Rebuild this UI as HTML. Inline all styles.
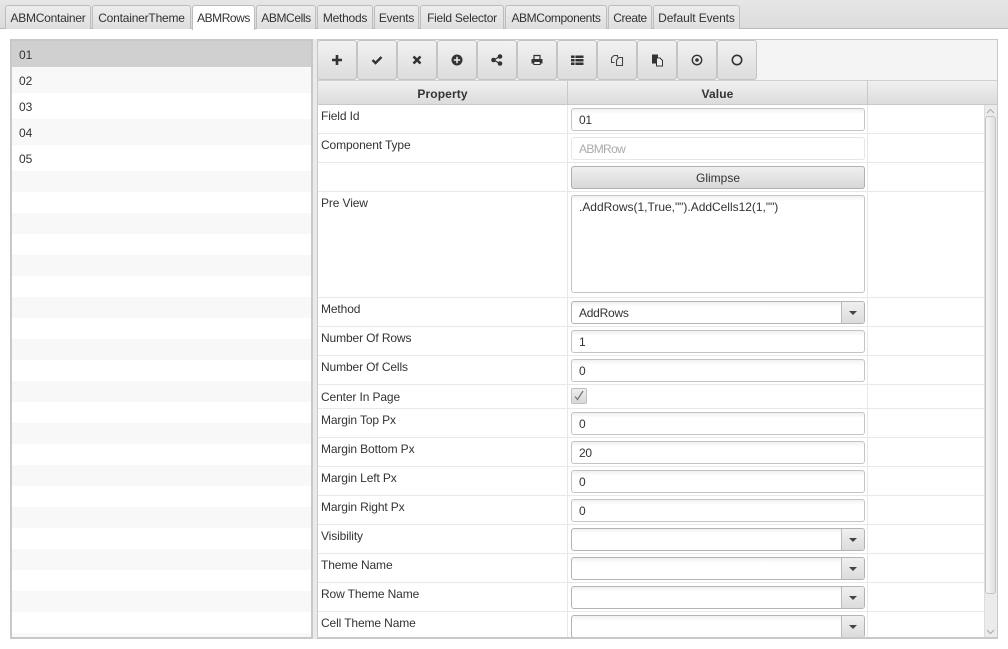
<!DOCTYPE html>
<html><head><meta charset="utf-8"><title>ABMRows</title>
<style>
html,body{margin:0;padding:0;width:1008px;height:649px;overflow:hidden;background:#fff}
body{font-family:"Liberation Sans",sans-serif;font-size:12px;color:#333;position:relative}
div{position:absolute;box-sizing:border-box;white-space:nowrap}
.tab{top:5px;height:24px;border:1px solid #bdbdbd;border-bottom:0;border-radius:3px 3px 0 0;background:linear-gradient(#ededed,#dedede);text-align:center;line-height:24px;letter-spacing:-.25px}
.tab.a{background:#fff;height:25px;z-index:2}
.it{left:12px;width:299px;height:21px;background:#f8f8f8}
.l{left:12px;width:299px;height:26px;padding-left:7px;line-height:28px}
.b{top:40px;width:40px;height:40px;border:1px solid #c4c4c4;border-radius:3px;background:linear-gradient(#f2f2f2,#dcdcdc)}
.b svg{position:absolute;left:10px;top:10px}
.h{top:81px;height:24px;background:linear-gradient(#f0f0f0,#dcdcdc);border-right:1px solid #c8c8c8;border-bottom:1px solid #c8c8c8;text-align:center;font-weight:bold;line-height:26px;letter-spacing:.12px}
.ln{left:318px;width:666px;height:1px;background:#e8e8e8}
.p{left:321px;line-height:14px;letter-spacing:-.12px}
.i{left:571px;width:294px;height:23px;border:1px solid #c4c4c4;border-radius:3px;padding-left:7px;line-height:23px;background:linear-gradient(#f1f1f1,#fff 5px);letter-spacing:-.25px}
.s{border-color:#b4b4b4}
.ar{right:0;top:0;width:23px;height:21px;border-left:1px solid #bbb;background:linear-gradient(#f0f0f0,#dcdcdc);border-radius:0 2px 2px 0}
.ar:after{content:"";position:absolute;left:7px;top:9px;border:4px solid transparent;border-top:4px solid #444;border-bottom:0}
</style></head><body>
<div style="left:0;top:0;width:1008px;height:29px;background:linear-gradient(#e6e6e6,#dcdcdc);border-bottom:1px solid #b8b8b8"></div>
<div class="tab" style="left:5px;width:86px">ABMContainer</div>
<div class="tab" style="left:92px;width:99px;letter-spacing:-.2px">ContainerTheme</div>
<div class="tab a" style="left:192px;width:63px;letter-spacing:-.45px">ABMRows</div>
<div class="tab" style="left:256px;width:60px;letter-spacing:-.4px">ABMCells</div>
<div class="tab" style="left:317px;width:56px">Methods</div>
<div class="tab" style="left:374px;width:45px">Events</div>
<div class="tab" style="left:420px;width:84px">Field Selector</div>
<div class="tab" style="left:505px;width:102px;letter-spacing:-.38px">ABMComponents</div>
<div class="tab" style="left:608px;width:44px;letter-spacing:-.4px">Create</div>
<div class="tab" style="left:653px;width:87px;letter-spacing:-.1px">Default Events</div>

<div style="left:10px;top:39px;width:303px;height:600px;border:2px solid #c8c8c8;background:#fff"></div>
<div style="left:313px;top:39px;width:4px;height:600px;background:#eaeaea"></div>
<div class="l" style="top:41px;background:#d0d0d0">01</div>
<div class="l" style="top:67px;background:#f8f8f8">02</div>
<div class="l" style="top:93px">03</div>
<div class="l" style="top:119px;background:#f8f8f8">04</div>
<div class="l" style="top:145px">05</div>
<div class="it" style="top:171px"></div><div class="it" style="top:213px"></div><div class="it" style="top:255px"></div><div class="it" style="top:297px"></div><div class="it" style="top:339px"></div><div class="it" style="top:381px"></div><div class="it" style="top:423px"></div><div class="it" style="top:465px"></div><div class="it" style="top:507px"></div><div class="it" style="top:549px"></div><div class="it" style="top:591px"></div><div class="it" style="top:633px;height:4px"></div>

<div style="left:317px;top:39px;width:681px;height:600px;border:1px solid #c8c8c8;border-bottom:2px solid #c8c8c8;background:#fff"></div>
<div style="left:318px;top:40px;width:679px;height:41px;background:#f4f4f4;border-bottom:1px solid #d0d0d0"></div>

<div class="b" style="left:317px"><svg width="18" height="18" fill="#333"><path d="M7.700 4h2.600v3.700H14v2.600h-3.700V14H7.700v-3.700H4V7.700h3.700z"/></svg></div>
<div class="b" style="left:357px"><svg width="18" height="18"><path d="M4.500 9l3 3 6-6" fill="none" stroke="#333" stroke-width="2.400"/></svg></div>
<div class="b" style="left:397px"><svg width="18" height="18"><path d="M5.500 5.500l7 7M12.500 5.500l-7 7" fill="none" stroke="#333" stroke-width="2.600"/></svg></div>
<div class="b" style="left:437px"><svg width="18" height="18"><circle cx="9" cy="9" r="5.500" fill="#333"/><path d="M5.800 9h6.400M9 5.800v6.400" stroke="#eee" stroke-width="1.500"/></svg></div>
<div class="b" style="left:477px"><svg width="18" height="18" fill="#333"><circle cx="5.500" cy="9" r="2.300"/><circle cx="12" cy="5.500" r="2.300"/><circle cx="12" cy="12.500" r="2.300"/><path d="M5.500 9L12 5.500M5.500 9L12 12.500" stroke="#333" stroke-width="1.200"/></svg></div>
<div class="b" style="left:517px"><svg width="18" height="18"><path d="M6 8V4.500h6V8" fill="none" stroke="#333" stroke-width="1.200"/><path d="M3.500 8h11v4.500h-11z" fill="#333"/><path d="M5.800 10.500h6.400v3H5.800z" fill="#ececec" stroke="#333"/></svg></div>
<div class="b" style="left:557px"><svg width="18" height="18" fill="#333"><path d="M3 4.500h12.500V7H3zM3 8h12.500v2.500H3zM3 11.500h12.500V14H3z"/><path d="M7 4v10.500" stroke="#eee" stroke-width=".8"/></svg></div>
<div class="b" style="left:597px"><svg width="18" height="18" fill="none" stroke="#444" stroke-width="1.100"><path d="M6.500 11.500h-3V7l2.500-2.500h3.500v2"/><path d="M8.500 14.500V9l2.500-2.500h3.500v8z"/></svg></div>
<div class="b" style="left:637px"><svg width="18" height="18"><path d="M4 3.500h6v3H8v6H4z" fill="#333"/><path d="M8.500 7h3.500l2.500 2.500v5.500h-6z" fill="#eee" stroke="#333"/></svg></div>
<div class="b" style="left:677px"><svg width="18" height="18"><circle cx="9" cy="9" r="4.700" fill="none" stroke="#333" stroke-width="1.400"/><circle cx="9" cy="9" r="1.800" fill="#333"/></svg></div>
<div class="b" style="left:717px"><svg width="18" height="18"><circle cx="9" cy="9" r="4.700" fill="none" stroke="#333" stroke-width="1.600"/></svg></div>

<div class="h" style="left:318px;width:250px">Property</div>
<div class="h" style="left:568px;width:300px">Value</div>
<div class="h" style="left:868px;width:129px;border-right:0"></div>

<div style="left:567px;top:105px;width:1px;height:532px;background:#e8e8e8"></div>
<div style="left:867px;top:105px;width:1px;height:532px;background:#e8e8e8"></div>
<div class="ln" style="top:133px"></div><div class="ln" style="top:162px"></div><div class="ln" style="top:191px"></div><div class="ln" style="top:297px"></div><div class="ln" style="top:326px"></div><div class="ln" style="top:355px"></div><div class="ln" style="top:384px"></div><div class="ln" style="top:408px"></div><div class="ln" style="top:437px"></div><div class="ln" style="top:466px"></div><div class="ln" style="top:495px"></div><div class="ln" style="top:524px"></div><div class="ln" style="top:553px"></div><div class="ln" style="top:582px"></div><div class="ln" style="top:611px"></div>

<div class="p" style="top:109px">Field Id</div>
<div class="p" style="top:138px">Component Type</div>
<div class="p" style="top:196px">Pre View</div>
<div class="p" style="top:302px">Method</div>
<div class="p" style="top:331px">Number Of Rows</div>
<div class="p" style="top:360px">Number Of Cells</div>
<div class="p" style="top:390px">Center In Page</div>
<div class="p" style="top:413px">Margin Top Px</div>
<div class="p" style="top:442px">Margin Bottom Px</div>
<div class="p" style="top:471px">Margin Left Px</div>
<div class="p" style="top:500px">Margin Right Px</div>
<div class="p" style="top:529px">Visibility</div>
<div class="p" style="top:558px">Theme Name</div>
<div class="p" style="top:587px">Row Theme Name</div>
<div class="p" style="top:616px">Cell Theme Name</div>

<div class="i" style="top:108px">01</div>
<div class="i" style="top:137px;border-color:#e6e6e6;background:#fff;color:#aaa;letter-spacing:-.65px">ABMRow</div>
<div class="i" style="top:166px;padding:0;text-align:center;background:linear-gradient(#f0f0f0,#d8d8d8);border-color:#b0b0b0;letter-spacing:0">Glimpse</div>
<div class="i" style="top:195px;height:98px;line-height:22px;padding-left:7px;letter-spacing:-.02px">.AddRows(1,True,"").AddCells12(1,"")</div>
<div class="i s" style="top:301px">AddRows<div class="ar"></div></div>
<div class="i" style="top:330px">1</div>
<div class="i" style="top:359px">0</div>
<div style="left:571px;top:388px;width:16px;height:16px;border:1px solid #c0c0c0;border-radius:2px;background:linear-gradient(#eee,#d8d8d8)"><svg width="14" height="14" style="position:absolute;left:0;top:0"><path d="M3 7.500l2.500 3L11 2" fill="none" stroke="#777" stroke-width="1.300"/></svg></div>
<div class="i" style="top:412px">0</div>
<div class="i" style="top:441px">20</div>
<div class="i" style="top:470px">0</div>
<div class="i" style="top:499px">0</div>
<div class="i s" style="top:528px"><div class="ar"></div></div>
<div class="i s" style="top:557px"><div class="ar"></div></div>
<div class="i s" style="top:586px"><div class="ar"></div></div>
<div style="left:571px;top:615px;width:294px;height:22px;overflow:hidden"><div class="i s" style="left:0;top:0"><div class="ar"></div></div></div>

<div style="left:984px;top:105px;width:13px;height:532px;background:#ebebeb;border-left:1px solid #ddd"></div>
<div style="left:985px;top:116px;width:11px;height:478px;border:1px solid #c4c4c4;border-radius:3px;background:linear-gradient(90deg,#f6f6f6,#e0e0e0)"></div>
<svg width="13" height="8" style="position:absolute;left:984px;top:107px"><path d="M3 6l3.500-3.500L10 6" fill="none" stroke="#aaa"/></svg>
<svg width="13" height="8" style="position:absolute;left:984px;top:628px"><path d="M3 2l3.500 3.500L10 2" fill="none" stroke="#aaa"/></svg>
</body></html>
